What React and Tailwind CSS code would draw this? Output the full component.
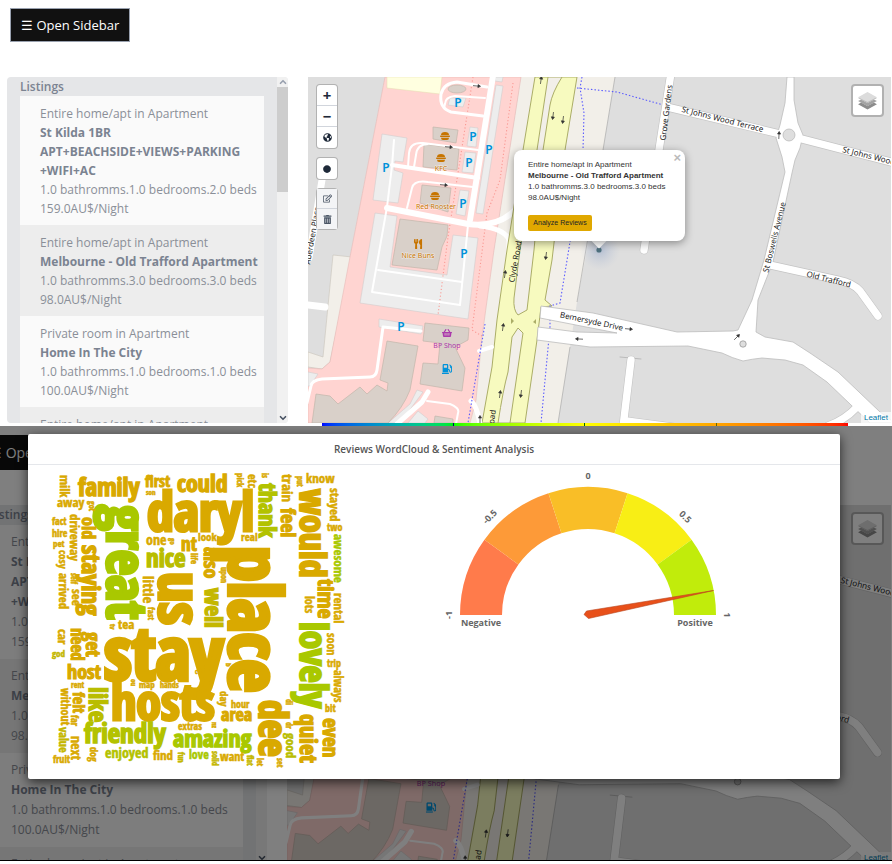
import React from "react";
import { ChevronDown, ChevronUp } from "lucide-react";
import { FaCircle, FaGasPump, FaGlobeAmericas, FaRegEdit, FaShoppingBasket, FaTrashAlt, FaUtensils } from "react-icons/fa";

const listings = [
  { kind: "Entire home/apt in Apartment", name: "St Kilda 1BR APT+BEACHSIDE+VIEWS+PARKING +WIFI+AC", rooms: "1.0 bathromms.1.0 bedrooms.2.0 beds", price: "159.0AU$/Night" },
  { kind: "Entire home/apt in Apartment", name: "Melbourne - Old Trafford Apartment", rooms: "1.0 bathromms.3.0 bedrooms.3.0 beds", price: "98.0AU$/Night" },
  { kind: "Private room in Apartment", name: "Home In The City", rooms: "1.0 bathromms.1.0 bedrooms.1.0 beds", price: "100.0AU$/Night" },
  { kind: "Entire home/apt in Apartment", name: "City Apartment", rooms: "1.0 bathromms.1.0 bedrooms.1.0 beds", price: "120.0AU$/Night" },
];

const GOLD = "#d9a900";
const OLIVE = "#c4b700";
const LIME = "#a9c800";

// word, x, y, size, vertical, colour. Vertical words read downwards from (x, y).
const words = [
  ["stay", 104, 680, 74, 0, GOLD], ["place", 229, 546, 72, 1, GOLD], ["us", 159, 572, 60, 1, GOLD],
  ["daryl", 147, 531, 54, 0, GOLD], ["great", 107, 505, 56, 1, LIME], ["hosts", 111, 720, 50, 0, GOLD],
  ["would", 300, 489, 36, 1, GOLD], ["lovely", 300, 622, 37, 1, LIME], ["dee", 259, 700, 40, 1, GOLD],
  ["staying", 82, 545, 25, 1, GOLD], ["old", 82, 517, 18, 1, GOLD], ["family", 78, 496, 25, 0, GOLD],
  ["first", 145, 487, 16, 0, GOLD], ["son", 146, 495, 7, 0, GOLD], ["could", 177, 492, 24, 0, GOLD],
  ["milk", 60, 475, 13, 1, GOLD], ["away", 57, 507, 13, 0, GOLD], ["got", 89, 501, 8, 1, GOLD],
  ["driveway", 70, 514, 13, 1, GOLD], ["fact", 52, 525, 10, 0, GOLD], ["hire", 52, 537, 10, 0, GOLD],
  ["pet", 53, 547, 9, 0, GOLD], ["cosy", 59, 550, 11, 1, GOLD], ["arrived", 59, 573, 13, 1, GOLD],
  ["self", 71, 573, 8, 1, GOLD], ["see", 72, 589, 13, 1, GOLD], ["one", 146, 545, 14, 0, GOLD],
  ["go", 170, 538, 7, 1, GOLD], ["nt", 181, 551, 19, 0, GOLD], ["nice", 146, 567, 25, 0, "#b9bd00"],
  ["life", 191, 553, 9, 1, GOLD], ["look", 198, 541, 11, 0, GOLD], ["real", 241, 541, 11, 0, GOLD],
  ["also", 204, 547, 20, 1, GOLD], ["well", 205, 588, 24, 1, OLIVE], ["upon", 221, 567, 8, 1, GOLD],
  ["pick", 237, 473, 9, 1, GOLD], ["etc", 248, 474, 12, 1, GOLD], ["is", 262, 473, 8, 1, GOLD],
  ["thank", 259, 483, 24, 1, "#b3c200"], ["train", 282, 474, 15, 1, GOLD], ["feel", 281, 508, 20, 1, GOLD],
  ["put", 297, 476, 8, 1, GOLD], ["know", 306, 483, 13, 0, GOLD], ["stayed", 330, 488, 13, 1, GOLD],
  ["two", 327, 531, 10, 0, GOLD], ["awesome", 334, 534, 13, 1, LIME], ["time", 318, 579, 22, 1, GOLD],
  ["lots", 305, 596, 12, 1, GOLD], ["rental", 334, 593, 13, 1, GOLD], ["little", 143, 576, 15, 1, GOLD],
  ["fast", 148, 607, 9, 1, GOLD], ["tea", 118, 629, 13, 0, GOLD], ["tv", 110, 624, 7, 1, GOLD],
  ["car", 58, 629, 13, 1, GOLD], ["god", 52, 657, 9, 0, OLIVE], ["need", 71, 628, 17, 1, GOLD],
  ["get", 86, 632, 20, 1, GOLD], ["host", 67, 679, 20, 0, GOLD], ["rent", 71, 688, 8, 0, GOLD],
  ["felt", 73, 692, 16, 1, GOLD], ["far", 71, 715, 10, 1, GOLD], ["like", 89, 687, 25, 1, "#b9bd00"],
  ["without", 61, 688, 12, 1, GOLD], ["value", 59, 727, 12, 1, OLIVE], ["next", 71, 736, 14, 1, GOLD],
  ["dog", 90, 747, 10, 1, GOLD], ["fruit", 53, 763, 10, 0, GOLD], ["friendly", 84, 743, 27, 0, "#b3c200"],
  ["enjoyed", 105, 758, 14, 0, "#b3c200"], ["find", 153, 760, 13, 0, GOLD], ["fun", 178, 752, 8, 1, OLIVE],
  ["love", 189, 759, 12, 0, LIME], ["amazing", 173, 747, 24, 0, LIME], ["extras", 178, 730, 10, 0, GOLD],
  ["map", 139, 688, 9, 0, GOLD], ["hands", 160, 688, 8, 0, GOLD], ["ou", 131, 679, 7, 1, GOLD],
  ["day", 220, 691, 11, 1, GOLD], ["hour", 231, 708, 10, 0, GOLD], ["area", 221, 721, 18, 0, GOLD],
  ["nz", 212, 722, 7, 1, GOLD], ["want", 220, 761, 12, 0, GOLD], ["solid", 212, 751, 8, 1, OLIVE],
  ["flat", 247, 755, 8, 1, OLIVE], ["let", 257, 758, 8, 1, GOLD], ["set", 277, 758, 8, 1, GOLD],
  ["good", 286, 733, 13, 1, "#b9bd00"], ["di", 286, 699, 8, 1, GOLD], ["dr", 286, 722, 8, 1, GOLD],
  ["quiet", 300, 714, 24, 1, GOLD], ["soon", 327, 633, 12, 1, GOLD], ["trip", 327, 667, 10, 0, GOLD],
  ["always", 334, 670, 12, 1, GOLD], ["bit", 325, 712, 10, 0, GOLD], ["even", 323, 718, 21, 1, GOLD],
  ["b", 226, 663, 7, 1, GOLD], ["c", 195, 674, 7, 0, GOLD],
];

function Burger({ x, y }) {
  return (
    <g fill="#c77400">
      <path d={`M${x - 4} ${y - 1}q0 -3 4 -3t4 3z`} />
      <rect x={x - 5} y={y - 0.5} width="10" height="1.5" rx="0.7" />
      <path d={`M${x - 4} ${y + 1.7}h8q0 2.3 -2 2.3h-4q-2 0 -2 -2.3z`} />
    </g>
  );
}

function Arrow({ x, y, turn }) {
  return (
    <path d="M-4 0H2M1 -1.5L3.5 0L1 1.5Z" transform={`translate(${x} ${y}) rotate(${turn})`} fill="#333" stroke="#333" strokeWidth="0.7" />
  );
}

function StreetMap({ marker }) {
  return (
    <svg viewBox="308 77 583 346" preserveAspectRatio="xMinYMin slice" className="block h-full w-full" role="img" aria-label="Street map">
      <rect x="308" y="77" width="600" height="360" fill="#dedede" />
      <path d="M521 77H615L603 150L585 260L577 302L570 347L558 423H462L494 250Z" fill="#f2efe9" />
      <path d="M615 77L603 150L577 302M570 347L558 423" fill="none" stroke="#aaa" strokeWidth="0.7" />
      <path d="M333 255L352 257L330 362L322 369L308 367V352L323 357Z" fill="#f2efe9" stroke="#c9c4bb" strokeWidth="0.6" />
      <path d="M385 77H521L494 250L482 337L476 400L470 423H308V368L322 369L330 362L350 257Z" fill="#ffd4d1" stroke="#e5bbb7" strokeWidth="0.6" />
      <path d="M387 77H442L440 94L387 88Z" fill="#ffffe0" stroke="#e5ddb0" strokeWidth="0.5" />
      <path d="M308 305L325 307M322 180L309 258" stroke="#fff" strokeWidth="7" strokeLinecap="round" />

      <g fill="#ededed" stroke="#d2cccc" strokeWidth="0.6">
        <path d="M382 134L407 138L403 162L395 161L394 170L403 173L398 203L373 200Z" />
        <path d="M375 213L397 216L390 267L447 275L453 235L478 238L468 319L360 303Z" />
        <path d="M470 127L478 128L476 147L467 146Z" />
        <path d="M465 152L476 153L473 173L462 172Z" />
        <path d="M460 190L469 191L465 216L456 214Z" />
        <path d="M496 85L503 86L483 214L476 213Z" />
        <path d="M495 77H503L502 82L495 81Z" />
        <path d="M450 98H466L463 107L448 105Z" />
        <path d="M379 319L423 326L421 334L379 327Z" />
        <path d="M417 390L423 392L400 423H388L410 404Z" />
        <path d="M418 411L428 419L425 423H408Z" />
        <path d="M308 372L318 374L310 386H308Z" />
      </g>
      <g fill="#d9d0c9" stroke="#c2b6ab" strokeWidth="0.7">
        <ellipse cx="457" cy="89" rx="9" ry="4" />
        <path d="M433 127L458 130L456 143L433 139Z" />
        <path d="M424 144L459 149L457 170L423 167Z" />
        <path d="M422 185L451 188L448 212L420 203Z" />
        <path d="M400 219L448 225L447 236L442 247L437 270L392 265Z" />
        <path d="M425 323L469 328L468 340L455 347L465 368L462 391L420 384L423 363L438 364L440 343L423 341Z" />
        <path d="M387 341L418 346L410 390Q403 408 388 423H312L316 394L330 396L338 404L360 387L367 394L377 385L387 391L388 383L380 380Z" />
        <path d="M435 416L453 419V423H434Z" />
      </g>

      <g fill="none" strokeLinejoin="round">
        <g stroke="#fa9a94" strokeWidth="1.1" strokeDasharray="1.2 2.2">
          <path d="M473 77L448 237L438 315" />
          <path d="M513 83L500 180L487 213L472 330L482 336" />
        </g>
        <g stroke="#fff" strokeLinecap="round">
          <path d="M493 76L478 170L470 220" strokeWidth="6" />
          <path d="M387 208L468 224Q500 228 518 207" strokeWidth="6" />
          <path d="M480 226Q505 229 509 240V262" strokeWidth="5" />
          <path d="M392 165L478 178" strokeWidth="4" />
          <path d="M487 87L457 82Q444 83 441 94Q439 108 451 112L483 116" strokeWidth="3" />
          <path d="M485 98L455 96Q445 97 445 104L444 108" strokeWidth="2" />
          <path d="M478 150L423 143Q410 142 409 153L408 167M428 144Q417 144 416 155L414 167" strokeWidth="2" />
          <path d="M473 187L428 182Q414 180 412 188L407 208" strokeWidth="2" />
          <path d="M394 140L392 166L387 207L372 292L460 305L468 225M378 270L462 282" strokeWidth="2" />
          <path d="M421 331L383 327L377 370Q376 377 370 377L322 379Q312 380 311 386L307 403" strokeWidth="3" />
          <path d="M428 392L422 402L397 424" strokeWidth="5" />
          <path d="M427 401L450 404Q460 408 458 413L456 424" strokeWidth="2" />
        </g>
      </g>

      <path d="M535 77H577L565 150L552 260L545 300L552 306L541 307L537 340L525 423H482L492 367L497 320L507 250L523 150Z" fill="#f7fabf" stroke="#abad67" strokeWidth="1" />
      <path d="M548 77H562Q552 93 550 105L543 150L534 250L527 310L518 315Q513 310 514 298L520 250L537 150Z" fill="#f2efe9" stroke="#abad67" strokeWidth="1" />
      <path d="M518 328L523 333L510 423H498Q503 390 508 372L512 337Z" fill="#f2efe9" stroke="#abad67" strokeWidth="1" />
      <path d="M511 318L514 321L511 324ZM536 319L533 322L536 324Z" fill="#abad67" />
      <g fill="none" stroke="#fff" strokeLinecap="round">
        <path d="M471 401Q477 406 480 424" strokeWidth="5" />
        <path d="M479 351L492 347" strokeWidth="4" />
      </g>
      <g fill="none" stroke="#5c5cff" strokeWidth="1.1" strokeDasharray="1.5 2">
        <path d="M485 324L468 423" />
        <path d="M582 77L580 88L584 113L583 150L570 242L560 303L550 306V327L541 423" />
        <path d="M577 88L617 92L667 106" />
      </g>

      <g fill="none" strokeLinecap="round" strokeLinejoin="round">
        <g stroke="#c4c4c4" strokeWidth="8.6">
          <path d="M671 73L659 150L644 250M667 107L780 134M798 138L895 163" />
          <path d="M770 265L838 280Q853 283 860 291L878 316" />
          <path d="M631 360L623 427M626 421L680 428M857 407Q845 420 828 426" />
        </g>
        <path d="M620 357L641 359" stroke="#aaa" strokeWidth="0.7" />
      </g>
      <path d="M787 77H794V100L798 123L803 135L800 148L795 160L792 173L773 262L758 300L756 332L765 337L793 342L810 353L838 372L880 412L895 423H870L850 404L827 382L803 365L785 360L762 358Q752 359 743 361Q732 358 722 353L688 346L590 347L537 340L538 327L577 332L617 333L540 318L541 306L593 313L677 332L733 331L738 330L752 300L764 260L785 172L782 157L776 138L780 125L785 103Z" fill="#fff" stroke="#bdbdbd" strokeWidth="0.8" />
      <g fill="none" stroke="#fff" strokeWidth="7.4" strokeLinecap="round" strokeLinejoin="round">
        <path d="M671 73L659 150L644 250M667 107L780 134M798 138L895 163" />
        <path d="M770 265L838 280Q853 283 860 291L878 316" />
        <path d="M631 360L623 427M626 421L680 428M857 407Q845 420 828 426" />
      </g>
      <circle cx="789" cy="135" r="6" fill="#dedede" stroke="#b5b5b5" strokeWidth="0.7" />
      <circle cx="743" cy="344" r="3.2" fill="#dedede" stroke="#999" strokeWidth="0.8" />

      <Arrow x={477} y={86} turn={5} />
      <Arrow x={449} y={147} turn={5} />
      <Arrow x={444} y={185} turn={5} />
      <Arrow x={541} y={80} turn={-82} />
      <Arrow x={553} y={116} turn={97} />
      <Arrow x={563} y={120} turn={97} />
      <Arrow x={546} y={256} turn={97} />
      <Arrow x={505} y={274} turn={-82} />
      <Arrow x={503} y={327} turn={-82} />
      <Arrow x={500} y={394} turn={-82} />
      <Arrow x={521} y={394} turn={97} />
      <Arrow x={480} y={419} turn={-90} />
      <Arrow x={629} y={329} turn={5} />
      <Arrow x={579} y={339} turn={183} />
      <Arrow x={737} y={337} turn={-45} />
      <Arrow x={779} y={135} turn={-87} />

      <Burger x={445} y={136} />
      <Burger x={441} y={158} />
      <Burger x={435} y={196} />
      <FaUtensils x="413" y="239" size={10} color="#c77400" />
      <FaShoppingBasket x="442" y="328" size={10} color="#ac39ac" />
      <FaGasPump x="442" y="364" size={10} color="#0092da" />

      <g fontFamily="'Noto Sans', sans-serif" fontSize="8" textAnchor="middle">
        <g fill="#0092da" fontSize="12" fontWeight="600">
          <text x="458" y="107">P</text>
          <text x="473" y="141">P</text>
          <text x="489" y="154">P</text>
          <text x="469" y="167">P</text>
          <text x="386" y="172">P</text>
          <text x="463" y="208">P</text>
          <text x="464" y="258">P</text>
          <text x="401" y="331">P</text>
        </g>
        <g fill="#c77400" stroke="#fff" strokeOpacity="0.6" strokeWidth="1" paintOrder="stroke" fontSize="7">
          <text x="441" y="171">KFC</text>
          <text x="436" y="209">Red Rooster</text>
          <text x="418" y="258">Nice Buns</text>
        </g>
        <text x="447" y="348" fontSize="7" fill="#ac39ac">BP Shop</text>
        <g fill="#222">
          <text transform="translate(518 262) rotate(-80)">Clyde Road</text>
          <text transform="translate(493 431) rotate(-82)">Clyde Road</text>
          <text transform="translate(315 236) rotate(-80)">Aberdeen Place</text>
          <text transform="translate(669 113) rotate(-83)">Grove Gardens</text>
          <text transform="translate(722 122) rotate(14)">St Johns Wood Terrace</text>
          <text transform="translate(842 152) rotate(14)" textAnchor="start">St Johns Wood Terrace</text>
          <text transform="translate(777 238) rotate(-76)">St Boswells Avenue</text>
          <text transform="translate(828 282) rotate(14)">Old Trafford</text>
          <text transform="translate(591 324) rotate(12)">Bemersyde Drive</text>
        </g>
      </g>
      {marker && (
        <g>
          <defs>
            <radialGradient id="halo">
              <stop offset="0" stopColor="#8ba0c8" stopOpacity="0.5" />
              <stop offset="1" stopColor="#b4c0d8" stopOpacity="0" />
            </radialGradient>
          </defs>
          <circle cx="600" cy="250" r="20" fill="url(#halo)" />
          <circle cx="599" cy="250" r="2.6" fill="#4f7280" />
        </g>
      )}
    </svg>
  );
}

function LayersButton() {
  return (
    <button type="button" aria-label="Layers" className="absolute right-[7px] top-[7px] flex size-[33px] items-center justify-center rounded border-2 border-black/20 bg-white bg-clip-padding">
      <svg viewBox="0 0 20 20" className="size-[21px]">
        <path d="M1 13.5L10 18.5L19 13.5L16 12L10 15.3L4 12Z" fill="#8c8c8c" />
        <path d="M1 10.5L10 15.5L19 10.5L16 9L10 12.3L4 9Z" fill="#a3a3a3" />
        <path d="M1 7.5L10 12.5L19 7.5L10 2.5Z" fill="#b9b9b9" />
        <path d="M1 7L10 2L19 7L10 11.5Z" fill="#dcdcdc" />
      </svg>
    </button>
  );
}

function Attribution() {
  return (
    <a href="#leaflet" className="absolute bottom-0 right-0 bg-white/70 px-[3px] font-['Liberation_Sans',Arial,sans-serif] text-[8px] leading-[11px] text-[#0078a8]">
      Leaflet
    </a>
  );
}

function ControlGroup({ children }) {
  return <div className="flex flex-col divide-y divide-gray-300 rounded border border-black/30 bg-white">{children}</div>;
}

function Control({ label, muted, children }) {
  return (
    <button type="button" aria-label={label} className={muted ? "flex size-5 items-center justify-center bg-gray-100 text-[9px] text-gray-600" : "flex h-[21px] w-5 items-center justify-center text-[9px] text-gray-800"}>
      {children}
    </button>
  );
}

function Popup() {
  return (
    <div className="absolute left-[206px] top-[73px] w-[171px] font-['Liberation_Sans',Arial,sans-serif]">
      <div className="absolute left-[79px] top-[84px] size-3 rotate-45 bg-white shadow-md" />
      <div className="relative rounded-lg bg-white px-[14px] pb-[10px] pt-[9px] text-[#333] shadow-[0_2px_9px_rgba(0,0,0,0.4)]">
        <button type="button" aria-label="Close popup" className="absolute right-1 top-0 text-[13px] font-bold leading-4 text-[#bbb]">×</button>
        <p className="whitespace-nowrap text-[8px] leading-[11px]">
          Entire home/apt in Apartment<br />
          <b>Melbourne - Old Trafford Apartment</b><br />
          1.0 bathromms.3.0 bedrooms.3.0 beds<br />
          98.0AU$/Night
        </p>
        <button type="button" className="mt-3 block h-4 w-16 whitespace-nowrap rounded-xs bg-[#e0a800] text-[7px] leading-4 text-[#212529]">Analyze Reviews</button>
      </div>
    </div>
  );
}

function Scrollbar() {
  return (
    <div className="flex w-[11px] shrink-0 flex-col items-center bg-[#f1f1f1]">
      <ChevronUp className="size-[10px] shrink-0 text-gray-400" strokeWidth={4} />
      <div className="h-[105px] w-full bg-[#cdcdcd]" />
      <ChevronDown className="mt-auto size-[10px] shrink-0 text-gray-600" strokeWidth={4} />
    </div>
  );
}

function Listings({ large }) {
  return (
    <aside className={large ? "flex h-[358px] w-[291px] shrink-0 overflow-hidden rounded-sm bg-[#e5e6e8]" : "flex h-[346px] w-[281px] shrink-0 overflow-hidden rounded-sm bg-[#e5e6e8]"}>
      <div className="min-w-0 flex-1 pl-[13px] pr-[13px]">
        <h2 className={large ? "h-5 text-[12px] font-semibold leading-5 text-[#7b8391]" : "h-[19px] text-[12px] font-semibold leading-[19px] text-[#7b8391]"}>Listings</h2>
        <ul>
          {listings.map((item, i) => (
            <li key={i} className={i % 2 ? "bg-[#ededed]" : "bg-[#fafafa]"}>
              <div className={large ? "py-[7px] pl-[22px] text-[12px] leading-5 text-[#8a8f98]" : "pb-[7px] pl-5 pt-2 text-[12px] leading-[19px] text-[#8a8f98]"}>
                <p className="whitespace-nowrap">{item.kind}</p>
                <p className={i === 0 ? "font-bold text-[#7b8391]" : "whitespace-nowrap font-bold text-[#7b8391]"}>{item.name}</p>
                <p className="whitespace-nowrap">{item.rooms}</p>
                <p>{item.price}</p>
              </div>
            </li>
          ))}
        </ul>
      </div>
      <Scrollbar />
    </aside>
  );
}

function Explorer() {
  return (
    <section className="h-[426px] overflow-hidden bg-white">
      <div className="px-[10px] pt-2">
        <button type="button" className="h-[34px] whitespace-nowrap border border-gray-400 bg-[#111] px-[10px] pt-px text-[13px] text-white">☰ Open Sidebar</button>
      </div>
      <div className="mt-[35px] flex gap-5 pl-[7px] pr-px">
        <Listings />
        <div className="min-w-0 flex-1">
          <div className="relative h-[346px] overflow-hidden">
            <StreetMap marker />
            <div className="absolute left-2 top-[7px] flex flex-col gap-2">
              <ControlGroup>
                <Control label="Zoom in"><span className="text-[15px] font-bold">+</span></Control>
                <Control label="Zoom out"><span className="text-[15px] font-bold">−</span></Control>
                <Control label="World view"><FaGlobeAmericas /></Control>
              </ControlGroup>
              <ControlGroup>
                <Control label="Draw circle"><FaCircle size={8} /></Control>
              </ControlGroup>
              <ControlGroup>
                <Control label="Edit layers" muted><FaRegEdit /></Control>
                <Control label="Delete layers" muted><FaTrashAlt /></Control>
              </ControlGroup>
            </div>
            <LayersButton />
            <Popup />
            <Attribution />
          </div>
          <div className="ml-[14px] mr-[43px] grid h-[3px] grid-cols-4 divide-x divide-black/60">
            <span className="bg-linear-to-r from-[#0000ff] to-[#00ee00]" />
            <span className="bg-linear-to-r from-[#00ff00] to-[#ffff00]" />
            <span className="bg-linear-to-r from-[#ffff00] to-[#ffa500]" />
            <span className="bg-linear-to-r from-[#ffa500] to-[#ff0000]" />
          </div>
        </div>
      </div>
    </section>
  );
}

function WordCloud() {
  return (
    <svg viewBox="50 472 297 298" className="w-[297px] shrink-0" role="img" aria-label="Review word cloud" fontFamily="Impact, 'Open Sans Condensed', 'Liberation Sans Narrow', 'DejaVu Sans Condensed', sans-serif" fontWeight="900">
      {words.map(([word, x, y, size, vertical, color], i) => (
        <text key={i} transform={vertical ? `translate(${x} ${y}) rotate(90)` : `translate(${x} ${y})`} fontSize={size} fill={color} stroke={color} strokeWidth={size > 15 ? size / 17 : 0.5}>
          {word}
        </text>
      ))}
    </svg>
  );
}

const bands = ["#ff7b4b", "#fd9a38", "#f9be27", "#f8ee15", "#c1ec0b"];

function bandPath(i) {
  const point = (r, k) => {
    const a = Math.PI - (k * Math.PI) / 5;
    return `${588 + r * Math.cos(a)} ${615 - r * Math.sin(a)}`;
  };
  return `M${point(128, i)}A128 128 0 0 1 ${point(128, i + 1)}L${point(86, i + 1)}A86 86 0 0 0 ${point(86, i)}Z`;
}

function Gauge() {
  return (
    <svg viewBox="440 465 300 170" className="w-[300px] shrink-0" role="img" aria-label="Sentiment gauge" fontFamily="'Open Sans', 'Noto Sans', sans-serif" fontSize="9" fill="#666" textAnchor="middle">
      {bands.map((color, i) => (
        <path key={color} d={bandPath(i)} fill={color} />
      ))}
      <path d="M713.5 590.5L586.5 611L584 614.5L588.5 618.5Z" fill="#e8501a" stroke="#b8451f" strokeWidth="0.6" />
      <g fontWeight="700">
        <text x="588" y="479">0</text>
        <text transform="translate(492 519) rotate(-45)">-0.5</text>
        <text transform="translate(683 519) rotate(45)">0.5</text>
        <text transform="translate(452 615) rotate(-90)">-1</text>
        <text transform="translate(724 615) rotate(90)">1</text>
        <text x="481" y="626">Negative</text>
        <text x="695" y="626">Positive</text>
      </g>
    </svg>
  );
}

function ReviewsDialog() {
  return (
    <section className="relative h-[435px] overflow-hidden border-b border-black bg-white">
      <div inert>
        <div className="-ml-[22px] pt-[9px]">
          <button type="button" className="h-[35px] whitespace-nowrap bg-[#111] px-[11px] text-[14px] text-white">☰ Open Sidebar</button>
        </div>
        <div className="-ml-6 mt-[35px] flex gap-5 pr-px">
          <Listings large />
          <div className="relative h-[358px] min-w-0 flex-1 overflow-hidden">
            <StreetMap />
            <LayersButton />
            <Attribution />
          </div>
        </div>
      </div>
      <div className="absolute inset-0 bg-black/50 pl-7 pr-[52px] pt-2">
        <div role="dialog" aria-labelledby="reviews-title" className="h-[345px] rounded-xs bg-white shadow-[0_3px_12px_rgba(0,0,0,0.7)]">
          <h2 id="reviews-title" className="h-[31px] border-b border-gray-200 text-center text-[10px] font-semibold leading-[31px] text-[#555]">Reviews WordCloud &amp; Sentiment Analysis</h2>
          <div className="flex items-start gap-[93px] pl-[22px]">
            <div className="pt-[7px]">
              <WordCloud />
            </div>
            <Gauge />
          </div>
        </div>
      </div>
    </section>
  );
}

export default function App() {
  return (
    <main className="min-h-screen bg-white font-['Open_Sans','Noto_Sans',sans-serif]">
      <Explorer />
      <ReviewsDialog />
    </main>
  );
}
